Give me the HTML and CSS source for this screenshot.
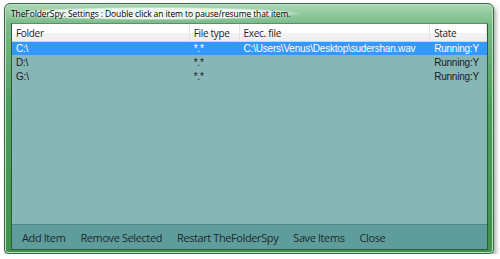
FILE: index.html
```html
<!DOCTYPE html>
<html lang="en">
<head>
    <meta charset="UTF-8">
    <title>TheFolderSpy: Settings</title>
    <link rel="stylesheet" href="styles.css">
</head>
<body>

<div class="window">
    <div class="titlebar">
        <span class="title">TheFolderSpy: Settings : Double click an item to pause/resume that item.</span>
    </div>

    <div class="client">
        <!-- list of watched folders -->
        <div class="listview">
            <div class="row header">
                <div class="col folder">Folder</div>
                <div class="col type">File type</div>
                <div class="col exec">Exec. file</div>
                <div class="col state">State</div>
            </div>
            <div class="row selected">
                <div class="col folder">C:\</div>
                <div class="col type">*.*</div>
                <div class="col exec">C:\Users\Venus\Desktop\sudershan.wav</div>
                <div class="col state">Running:Y</div>
            </div>
            <div class="row">
                <div class="col folder">D:\</div>
                <div class="col type">*.*</div>
                <div class="col exec"></div>
                <div class="col state">Running:Y</div>
            </div>
            <div class="row">
                <div class="col folder">G:\</div>
                <div class="col type">*.*</div>
                <div class="col exec"></div>
                <div class="col state">Running:Y</div>
            </div>
        </div>

        <!-- bottom command bar -->
        <div class="toolbar">
            <span class="tool">Add Item</span>
            <span class="tool">Remove Selected</span>
            <span class="tool">Restart TheFolderSpy</span>
            <span class="tool">Save Items</span>
            <span class="tool">Close</span>
        </div>
    </div>
</div>

</body>
</html>
```

FILE: styles.css
```css
body {
    margin: 0;
    padding: 0;
    background-color: #ffffff;
    font-family: "Open Sans", "Noto Sans", sans-serif;
}
.window {
    box-sizing: border-box;
    width: 490px;
    height: 251px;
    margin: 3px 0 0 4px;
    padding: 0 5px 3px 6px;
    display: flex;
    flex-direction: column;
    border: 1px solid #3c6a48;
    border-radius: 6px 6px 4px 4px;
    background: linear-gradient(to bottom, #a9d6b4 0, #79bb87 8%, #4f9d5c 40%, #3f9149 100%);
    box-shadow: inset 0 0 0 1px #b9e0c2, 2px 3px 4px rgba(0, 0, 0, 0.35);
}
.titlebar {
    height: 19px;
    display: flex;
    align-items: center;
}
.title {
    font-size: 8.5px;
    color: #000000;
    padding: 1px 10px 1px 0;
    letter-spacing: -0.1px;
    background: radial-gradient(ellipse at center, rgba(255, 255, 255, 0.85) 55%, rgba(255, 255, 255, 0) 72%);
    text-shadow: 0 0 4px #ffffff;
}
.client {
    flex: 1;
    display: flex;
    flex-direction: column;
    background-color: #86b6b6;
    border: 1px solid #2c5c3a;
    border-top-color: #5b8f6a;
}
.listview {
    flex: 1;
    font-family: "Liberation Sans", Arial, sans-serif;
    font-size: 10px;
    letter-spacing: -0.2px;
    color: #1a1a1a;
}
.row {
    display: flex;
    height: 14px;
    align-items: center;
}
.row.header {
    height: 17px;
    background: linear-gradient(to bottom, #ffffff 0, #ffffff 50%, #f3f4f5 51%, #eceef0 100%);
    border-bottom: 1px solid #d5d5d5;
    font-family: "Open Sans", "Noto Sans", sans-serif;
    font-size: 10px;
    letter-spacing: -0.3px;
    color: #1e1e1e;
}
.row.selected {
    height: 13px;
    background-color: #3399ff;
    color: #ffffff;
}
.col {
    box-sizing: border-box;
    padding-left: 4px;
    white-space: nowrap;
    overflow: hidden;
}
.header .col {
    border-right: 1px solid #e3e5e7;
    height: 100%;
    display: flex;
    align-items: center;
}
.folder {
    width: 178px;
}
.type {
    width: 50px;
}
.exec {
    width: 191px;
}
.state {
    width: 57px;
}
.toolbar {
    height: 24px;
    display: flex;
    align-items: center;
    gap: 15px;
    padding-left: 10px;
    background-color: #5f9d9d;
    border-top: 1px solid #4f8888;
    font-size: 11px;
    letter-spacing: -0.4px;
    color: #1c2b2b;
}
.tool {
    cursor: pointer;
}
```
